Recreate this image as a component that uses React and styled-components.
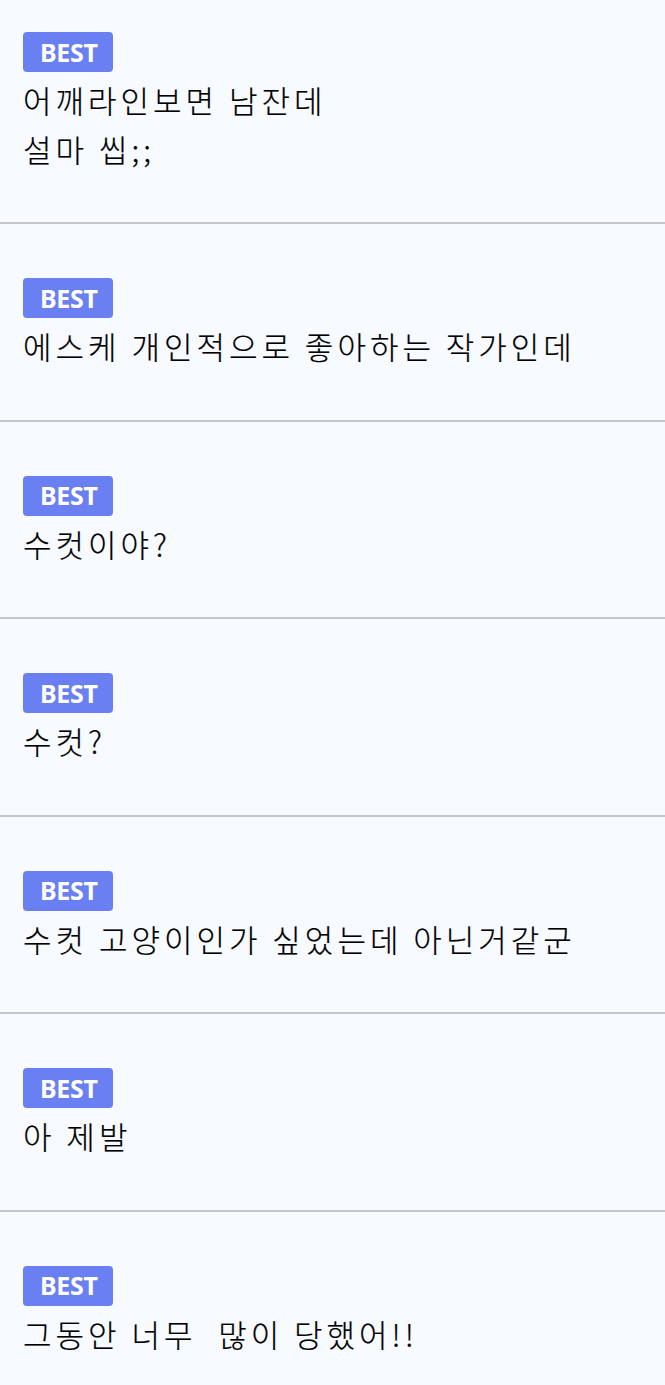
import React from "react";
import styled, { createGlobalStyle } from "styled-components";

const GlobalStyle = createGlobalStyle`
  body {
    margin: 0;
    background-color: #f7faff;
  }
`;

const List = styled.ul`
  list-style: none;
  margin: 0;
  padding: 0;
  background-color: #f7faff;
  font-family: "Noto Sans CJK KR", "Noto Sans", sans-serif;
`;

const Item = styled.li`
  display: flex;
  flex-direction: column;
  align-items: flex-start;
  padding: 54px 23px 49px;
  border-bottom: 2px solid #c6c6ca;
  &:first-child {
    padding-top: 32px;
  }
`;

const Badge = styled.span`
  display: inline-flex;
  align-items: center;
  justify-content: center;
  height: 40px;
  padding: 0 15px 0 17px;
  border-radius: 4px;
  background-color: #6a7ff1;
  color: #ffffff;
  font-family: "Noto Sans", "Open Sans", sans-serif;
  font-weight: 700;
  font-size: 25px;
  line-height: 1;
  letter-spacing: -0.3px;
`;

const Text = styled.p`
  margin: 4px 0 0;
  font-size: 31px;
  font-weight: 300;
  line-height: 48.5px;
  letter-spacing: 4px;
  color: #000000;
  -webkit-text-stroke: 0.2px #000000;
  white-space: pre-wrap;
`;

const comments = [
  "어깨라인보면 남잔데\n설마 씹;;",
  "에스케 개인적으로 좋아하는 작가인데",
  "수컷이야?",
  "수컷?",
  "수컷 고양이인가 싶었는데 아닌거같군",
  "아 제발",
  "그동안 너무  많이 당했어!!",
];

function App() {
  return (
    <>
      <GlobalStyle />
      <List>
        {comments.map((text, i) => (
          <Item key={i}>
            <Badge>BEST</Badge>
            <Text>{text}</Text>
          </Item>
        ))}
      </List>
    </>
  );
}

export default App;
